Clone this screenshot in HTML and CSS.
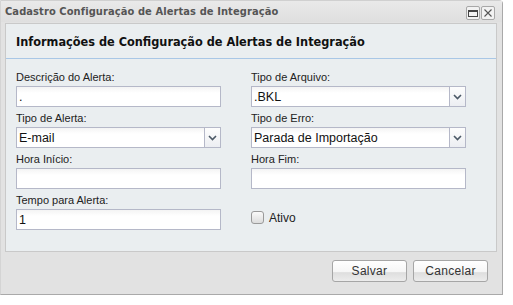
FILE: index.html
```html
<!DOCTYPE html>
<html lang="pt-BR">
<head>
    <meta charset="UTF-8">
    <title>Cadastro Configuração de Alertas de Integração</title>
    <link rel="stylesheet" href="styles.css">
</head>
<body>
    <div class="janela">
        <div class="titulo">
            <span class="titulo-texto">Cadastro Configuração de Alertas de Integração</span>
            <div class="ferramentas">
                <span class="ferramenta">
                    <svg width="12" height="12" viewBox="0 0 12 12"><rect x="1.5" y="3.5" width="9" height="6" fill="none" stroke="#444" stroke-width="1"/><line x1="1.5" y1="4.5" x2="10.5" y2="4.5" stroke="#444"/></svg>
                </span>
                <span class="ferramenta">
                    <svg width="12" height="12" viewBox="0 0 12 12"><path d="M2.5 2.5 L9.5 9.5 M9.5 2.5 L2.5 9.5" stroke="#555" stroke-width="1.1" fill="none"/></svg>
                </span>
            </div>
        </div>

        <div class="painel">
            <div class="painel-cabecalho">Informações de Configuração de Alertas de Integração</div>

            <div class="formulario">
                <div class="campo">
                    <label class="rotulo">Descrição do Alerta:</label>
                    <input class="entrada" type="text" value=".">
                </div>
                <div class="campo">
                    <label class="rotulo">Tipo de Arquivo:</label>
                    <div class="combo">
                        <input class="entrada" type="text" value=".BKL" readonly>
                        <span class="gatilho"><svg width="9" height="6" viewBox="0 0 9 6"><path d="M1 1 L4.5 4.5 L8 1" stroke="#4b5866" stroke-width="1.6" fill="none"/></svg></span>
                    </div>
                </div>
                <div class="campo">
                    <label class="rotulo">Tipo de Alerta:</label>
                    <div class="combo">
                        <input class="entrada" type="text" value="E-mail" readonly>
                        <span class="gatilho"><svg width="9" height="6" viewBox="0 0 9 6"><path d="M1 1 L4.5 4.5 L8 1" stroke="#4b5866" stroke-width="1.6" fill="none"/></svg></span>
                    </div>
                </div>
                <div class="campo">
                    <label class="rotulo">Tipo de Erro:</label>
                    <div class="combo">
                        <input class="entrada" type="text" value="Parada de Importação" readonly>
                        <span class="gatilho"><svg width="9" height="6" viewBox="0 0 9 6"><path d="M1 1 L4.5 4.5 L8 1" stroke="#4b5866" stroke-width="1.6" fill="none"/></svg></span>
                    </div>
                </div>
                <div class="campo">
                    <label class="rotulo">Hora Início:</label>
                    <input class="entrada" type="text" value="">
                </div>
                <div class="campo">
                    <label class="rotulo">Hora Fim:</label>
                    <input class="entrada" type="text" value="">
                </div>
                <div class="campo">
                    <label class="rotulo">Tempo para Alerta:</label>
                    <input class="entrada" type="text" value="1">
                </div>
                <div class="campo campo-check">
                    <span class="caixa"></span>
                    <span class="rotulo-check">Ativo</span>
                </div>
            </div>
        </div>

        <div class="rodape">
            <button class="botao">Salvar</button>
            <button class="botao">Cancelar</button>
        </div>
    </div>
</body>
</html>
```

FILE: styles.css
```css
body {
    margin: 0;
    background-color: white;
    font-family: "Liberation Sans", Arial, sans-serif;
}
.janela {
    width: 503px;
    height: 295px;
    box-sizing: border-box;
    border: 1px solid #a9a9a9;
    border-top-color: #d0d0d0;
    border-left-color: #d4d4d4;
    border-radius: 0 4px 0 0;
    background-color: #e2e2e2;
}
.titulo {
    height: 21px;
    display: flex;
    align-items: center;
    justify-content: space-between;
    padding: 0 7px 0 4px;
    background: linear-gradient(#e9e9e9, #dfdfdf);
}
.titulo-texto {
    font-family: "DejaVu Sans Condensed", sans-serif;
    font-weight: bold;
    font-size: 11px;
    letter-spacing: 0.1px;
    color: #555;
}
.ferramentas {
    display: flex;
    gap: 1px;
    margin-top: 2px;
}
.ferramenta {
    width: 12px;
    height: 12px;
    border: 1px solid #a8a8a8;
    border-radius: 2px;
    background-color: #f2f2f2;
    display: flex;
}
.painel {
    margin: 1px 5px 0 4px;
    height: 229px;
    box-sizing: border-box;
    border: 1px solid #c9c9c9;
    background-color: #eaeef0;
}
.painel-cabecalho {
    height: 34px;
    line-height: 36px;
    padding-left: 10px;
    border-bottom: 1px solid #a9c7e6;
    font-family: "DejaVu Sans Condensed", sans-serif;
    font-weight: bold;
    font-size: 12.6px;
    color: #111;
}
.formulario {
    display: grid;
    grid-template-columns: 205px 215px;
    column-gap: 30px;
    padding: 7px 0 0 10px;
}
.campo {
    display: flex;
    flex-direction: column;
}
.rotulo {
    height: 20px;
    box-sizing: border-box;
    padding-top: 3px;
    line-height: 16px;
    font-size: 11px;
    color: #222;
}
.entrada {
    height: 21px;
    box-sizing: border-box;
    width: 100%;
    margin: 0;
    border: 1px solid #b5b8c8;
    padding: 0 2px;
    background: linear-gradient(#f4f4f4, #fff 6px);
    font-family: "Liberation Sans", Arial, sans-serif;
    font-size: 12.5px;
    color: #111;
    outline: none;
}
.combo {
    display: flex;
    height: 21px;
}
.combo .entrada {
    border-right: none;
}
.gatilho {
    width: 17px;
    flex: none;
    box-sizing: border-box;
    border: 1px solid #b5b8c8;
    background: linear-gradient(#fdfdfd, #eceef2);
    display: flex;
    align-items: center;
    justify-content: center;
}
.campo-check {
    flex-direction: row;
    align-items: center;
    gap: 5px;
    padding-top: 18px;
    height: 21px;
}
.caixa {
    width: 11px;
    height: 11px;
    border: 1px solid #9a9a9a;
    border-radius: 3px;
    background: linear-gradient(#fafafa, #dcdcdc);
}
.rotulo-check {
    font-size: 12px;
    color: #222;
}
.rodape {
    display: flex;
    justify-content: flex-end;
    gap: 6px;
    padding: 8px 14px 0 0;
}
.botao {
    width: 75px;
    height: 22px;
    border: 1px solid #a6a6a6;
    border-radius: 3px;
    background: linear-gradient(#ffffff 0, #f6f6f6 55%, #dedede 58%, #ececec 100%);
    font-family: "Liberation Sans", Arial, sans-serif;
    font-size: 12px;
    letter-spacing: 0.3px;
    color: #333;
    padding: 0;
}
```
